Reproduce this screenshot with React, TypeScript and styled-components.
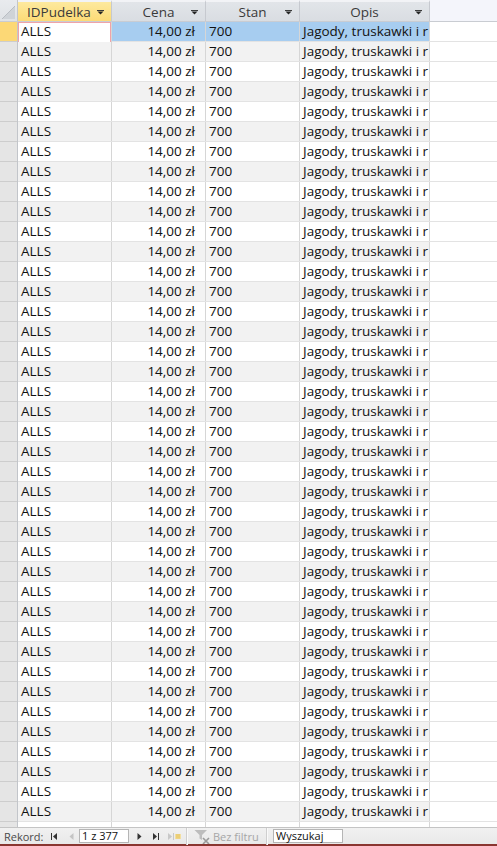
import React from "react";
import styled, { createGlobalStyle, css } from "styled-components";

const Global = createGlobalStyle`
  html, body { margin: 0; padding: 0; background: #ffffff; }
  body { font-family: "Open Sans", "Noto Sans", "Liberation Sans", sans-serif; }
  * { box-sizing: border-box; }
`;

const Frame = styled.div`
  width: 497px;
  height: 846px;
  display: flex;
  flex-direction: column;
  overflow: hidden;
  background: #ffffff;
`;

const Sheet = styled.div`
  flex: 1;
  overflow: hidden;
  display: flex;
  flex-direction: column;
`;

const HeaderRow = styled.div`
  display: flex;
  height: 22px;
  flex: none;
  border-bottom: 1px solid #c9ccd2;
  background: #f4f5fb;
`;

const Corner = styled.div`
  width: 18px;
  flex: none;
  border-right: 1px solid #c2c5ca;
  background: linear-gradient(#e9ebee, #dfe2e6);
  display: flex;
  align-items: flex-end;
  justify-content: flex-end;
  padding: 0 2px 2px 0;
`;

const HeadCell = styled.div<{ $w: number; $active?: boolean }>`
  width: ${(p) => p.$w}px;
  flex: none;
  position: relative;
  display: flex;
  align-items: center;
  justify-content: center;
  font-size: 13.5px;
  color: #3a3a3a;
  white-space: nowrap;
  border-right: 1px solid #c6c9cf;
  border-top: 2px solid #f2f3f6;
  background: ${(p) =>
    p.$active
      ? "linear-gradient(#fde99e, #fcdb76)"
      : "linear-gradient(#e2e5e9, #d9dde2)"};
  ${(p) =>
    p.$active &&
    css`
      justify-content: flex-start;
      padding-left: 9px;
    `}
`;

const Arrow = styled.svg`
  position: absolute;
  right: 7px;
  top: 8px;
`;

const Row = styled.div`
  display: flex;
  height: 20px;
  flex: none;
  border-bottom: 1px solid #e3e3e3;
  background: #ffffff;
`;

const Selector = styled.div<{ $current?: boolean }>`
  width: 18px;
  flex: none;
  border-right: 1px solid #c2c5ca;
  background: ${(p) => (p.$current ? "#fcd876" : "#e5e5e5")};
  box-shadow: inset 0 -1px 0 #cdcdcd;
  margin-bottom: -1px;
`;

const Cell = styled.div<{
  $w: number;
  $right?: boolean;
  $alt: boolean;
  $selected?: boolean;
  $focus?: boolean;
}>`
  width: ${(p) => p.$w}px;
  flex: none;
  font-size: 13.5px;
  line-height: 19px;
  color: #111111;
  white-space: nowrap;
  overflow: hidden;
  border-right: 1px solid #d6d6d6;
  padding: 0 3px;
  text-align: ${(p) => (p.$right ? "right" : "left")};
  ${(p) => p.$right && css`padding-right: 10px;`}
  background: ${(p) =>
    p.$selected ? "#a7cdf0" : p.$alt ? "#f2f2f2" : "#ffffff"};
  ${(p) =>
    p.$focus &&
    css`
      box-shadow: inset 0 0 0 1px #f0a3a9;
      margin-bottom: -1px;
      height: 21px;
    `}
`;

const Filler = styled.div`
  flex: 1;
`;

const StatusBar = styled.div`
  flex: none;
  height: 19px;
  display: flex;
  align-items: center;
  border-top: 1px solid #c4c4c4;
  border-bottom: 2px solid #8a3530;
  background: linear-gradient(#f1f1f1, #e9e9e9);
  font-size: 11px;
  color: #444444;
  padding-left: 4px;
`;

const Label = styled.span<{ $disabled?: boolean; $w: number }>`
  display: inline-block;
  width: ${(p) => p.$w}px;
  flex: none;
  color: ${(p) => (p.$disabled ? "#a6a6a6" : "#4a4a4a")};
  white-space: nowrap;
  line-height: 15px;
`;

const NavBtn = styled.span<{ $ml: number }>`
  display: inline-flex;
  flex: none;
  margin-left: ${(p) => p.$ml}px;
  align-items: center;
`;

const Box = styled.div<{ $w: number; $ml: number }>`
  width: ${(p) => p.$w}px;
  height: 14px;
  flex: none;
  margin-left: ${(p) => p.$ml}px;
  background: #ffffff;
  border: 1px solid #b5b5b5;
  font-size: 11px;
  line-height: 12px;
  color: #111111;
  padding-left: 2px;
  white-space: nowrap;
`;

const Sep = styled.div<{ $ml: number }>`
  width: 1px;
  height: 17px;
  flex: none;
  margin-left: ${(p) => p.$ml}px;
  background: #cfcfcf;
  box-shadow: 1px 0 0 #fafafa;
`;

const cols = [
  { key: "id", w: 94, title: "IDPudelka" },
  { key: "cena", w: 94, title: "Cena" },
  { key: "stan", w: 94, title: "Stan" },
  { key: "opis", w: 130, title: "Opis" },
];

const DropArrow = () => (
  <Arrow width="7" height="5" viewBox="0 0 7 5">
    <rect x="0" y="0" width="7" height="1" fill="#3a3a3a" />
    <path d="M0.5 1.5 H6.5 L3.5 4.5 Z" fill="#222" />
  </Arrow>
);

export default function App() {
  const rows = Array.from({ length: 41 }, (_, i) => i);
  return (
    <Frame>
      <Global />
      <Sheet>
        <HeaderRow>
          <Corner>
            <svg width="13" height="13" viewBox="0 0 13 13">
              <path d="M13 0 L13 13 L0 13 Z" fill="#cfd3d8" />
              <path d="M13 0 L0 13" stroke="#b9bdc3" strokeWidth="1" />
            </svg>
          </Corner>
          {cols.map((c, i) => (
            <HeadCell key={c.key} $w={c.w} $active={i === 0}>
              {c.title}
              <DropArrow />
            </HeadCell>
          ))}
          <Filler />
        </HeaderRow>
        {rows.map((r) => {
          const alt = r % 2 === 1;
          const sel = r === 0;
          const hidden = r === 40;
          return (
            <Row key={r}>
              <Selector $current={sel} />
              <Cell $w={94} $alt={alt} $focus={sel}>{hidden ? "" : "ALLS"}</Cell>
              <Cell $w={94} $alt={alt} $selected={sel} $right>
                {hidden ? "" : "14,00 zł"}
              </Cell>
              <Cell $w={94} $alt={alt} $selected={sel}>{hidden ? "" : "700"}</Cell>
              <Cell $w={130} $alt={alt} $selected={sel}>
                {hidden ? "" : "Jagody, truskawki i r"}
              </Cell>
              <Filler />
            </Row>
          );
        })}
      </Sheet>
      <StatusBar>
        <Label $w={40}>Rekord:</Label>
        <NavBtn $ml={7}>
          <svg width="6" height="7" viewBox="0 0 6 7">
            <rect x="0" y="0" width="1" height="7" fill="#333" />
            <path d="M6 0 L2 3.5 L6 7 Z" fill="#333" />
          </svg>
        </NavBtn>
        <NavBtn $ml={12}>
          <svg width="5" height="7" viewBox="0 0 5 7">
            <path d="M4.5 0 L0.5 3.5 L4.5 7 Z" fill="#c4c4c4" />
          </svg>
        </NavBtn>
        <Box $w={50} $ml={5}>1 z 377</Box>
        <NavBtn $ml={8}>
          <svg width="5" height="7" viewBox="0 0 5 7">
            <path d="M0.5 0 L4.5 3.5 L0.5 7 Z" fill="#333" />
          </svg>
        </NavBtn>
        <NavBtn $ml={11}>
          <svg width="6" height="7" viewBox="0 0 6 7">
            <path d="M0 0 L4 3.5 L0 7 Z" fill="#333" />
            <rect x="5" y="0" width="1" height="7" fill="#333" />
          </svg>
        </NavBtn>
        <NavBtn $ml={9}>
          <svg width="13" height="7" viewBox="0 0 13 7">
            <path d="M0 0 L4 3.5 L0 7 Z" fill="#c8c8c8" />
            <rect x="5" y="0" width="1" height="7" fill="#c8c8c8" />
            <rect x="7" y="1" width="6" height="5" fill="#f3dfa0" />
            <path d="M8 2 H12 M8 4 H12 M9 1 V6 M11 1 V6" stroke="#e8c96a" strokeWidth="1" />
          </svg>
        </NavBtn>
        <Sep $ml={5} />
        <NavBtn $ml={7}>
          <svg width="17" height="15" viewBox="0 0 17 15">
            <path d="M0.5 1 H13 L8 6 V11 L5.5 9.5 V6 Z" fill="#bdbdbd" />
            <path d="M9 9 L15 15 M15 9 L9 15" stroke="#9a9a9a" strokeWidth="1.6" />
          </svg>
        </NavBtn>
        <NavBtn $ml={2}>
          <Label $disabled $w={46}>Bez filtru</Label>
        </NavBtn>
        <Sep $ml={7} />
        <Box $w={70} $ml={6}>Wyszukaj</Box>
      </StatusBar>
    </Frame>
  );
}
